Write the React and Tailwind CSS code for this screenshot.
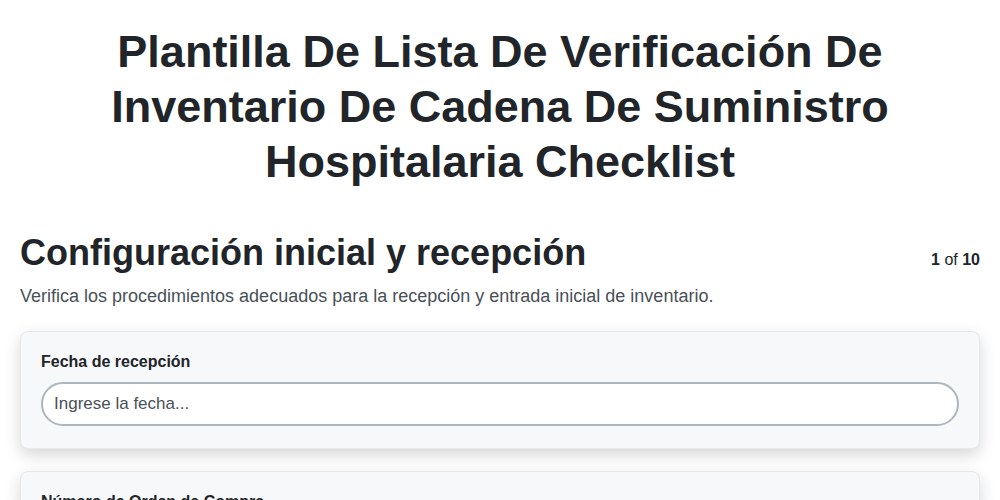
export default function App() {
  return (
    <div className="min-h-screen bg-white px-5 text-[#212529]" style={{ fontFamily: '"Liberation Sans", Arial, sans-serif' }}>
      <h1 className="pt-6 text-center text-[45px] font-bold leading-[55px]">
        Plantilla De Lista De Verificación De
        <br />
        Inventario De Cadena De Suministro
        <br />
        Hospitalaria Checklist
      </h1>
      <div className="mt-[42px] flex items-baseline justify-between">
        <h2 className="text-[36px] font-bold leading-[43px]">Configuración inicial y recepción</h2>
        <div className="text-[16px]">
          <span className="font-bold">1</span> of <span className="font-bold">10</span>
        </div>
      </div>
      <p className="mt-[9px] text-[18px] leading-[27px] text-[#495057]">
        Verifica los procedimientos adecuados para la recepción y entrada inicial de inventario.
      </p>
      <div className="mt-[21px] flex flex-col gap-[22px]">
        <div className="rounded-lg border border-[#e6e8ec] bg-[#f7f8fa] px-5 pb-[22px] pt-[19px] shadow-[0_6px_16px_rgba(0,0,0,0.16)]">
          <label className="mb-[9px] block text-[16px] font-bold leading-[22px]">Fecha de recepción</label>
          <input
            type="text"
            placeholder="Ingrese la fecha..."
            className="block w-full rounded-full border-2 border-[#adb5bd] bg-white px-[11px] py-[8px] text-[17px] leading-6 text-[#212529] outline-none placeholder:text-[#495057]"
          />
        </div>
        <div className="rounded-lg border border-[#e6e8ec] bg-[#f7f8fa] px-5 pb-[22px] pt-[19px] shadow-[0_6px_16px_rgba(0,0,0,0.16)]">
          <label className="mb-[9px] block text-[16px] font-bold leading-[22px]">Número de Orden de Compra</label>
          <input
            type="text"
            placeholder="Ingrese el número..."
            className="block w-full rounded-full border-2 border-[#adb5bd] bg-white px-[11px] py-[8px] text-[17px] leading-6 text-[#212529] outline-none placeholder:text-[#495057]"
          />
        </div>
      </div>
    </div>
  );
}
